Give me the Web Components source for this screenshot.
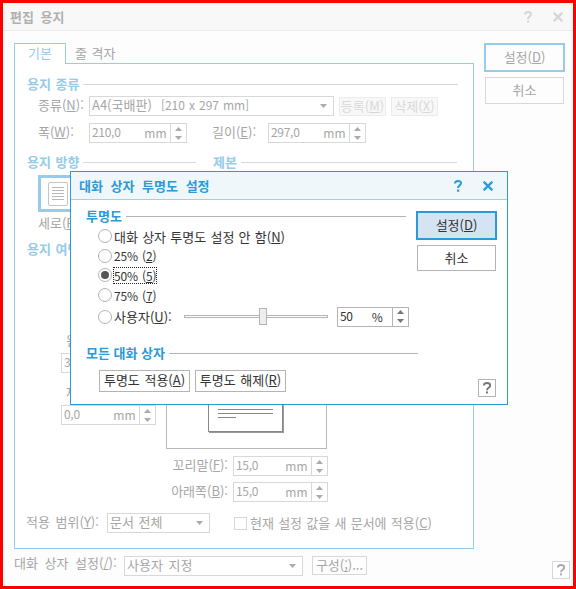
<!doctype html>
<html lang="ko">
<head>
<meta charset="utf-8">
<title>편집 용지</title>
<style>
  html, body { margin: 0; padding: 0; }
  body { width: 576px; height: 589px; overflow: hidden; font: 13px "Noto Sans CJK KR", sans-serif; }
  u { text-underline-offset: 1px; }
  .latin { font-size: 12px; letter-spacing: -.1px; }
</style>
</head>
<body>
<page-dialog>

  <tab-panel>
    <form-heading style="margin-top:13px">용지 종류</form-heading>
    <form-row style="margin:5px 0 0 11px">
      <form-label style="width:51px">종류(<u>N</u>):</form-label>
      <combo-box style="width:245px">A4(국배판)&nbsp; <span class="latin">[210 x 297 mm]</span></combo-box>
      <push-button disabled style="width:47px;height:19px;margin-left:5px">등록(<u>M</u>)</push-button>
      <push-button disabled style="width:47px;height:19px;margin-left:5px">삭제(<u>X</u>)</push-button>
    </form-row>
    <form-row style="margin:7px 0 0 11px">
      <form-label style="width:51px">폭(<u>W</u>):</form-label>
      <spin-field style="width:98px" value="210,0" unit="mm"></spin-field>
      <form-label style="width:56px;margin-left:25px">길이(<u>E</u>):</form-label>
      <spin-field style="width:98px" value="297,0" unit="mm"></spin-field>
    </form-row>
    <form-row style="margin-top:12px;gap:17px">
      <form-heading style="width:169px">용지 방향</form-heading>
      <form-heading style="width:244px">제본</form-heading>
    </form-row>
    <orient-choice style="margin:6px 0 0 11px">세로(<u>R</u>)</orient-choice>
    <form-heading style="margin-top:10px">용지 여백</form-heading>

    <form-row style="align-items:flex-start;margin:44px 0 0 34px;gap:10px">
      <div style="width:95px">
        <form-label style="height:20px;margin:31px 0 2px 5px">왼쪽</form-label>
        <spin-field style="width:95px" value="30,0"></spin-field>
        <form-label style="height:20px;margin:10px 0 2px 5px">제본</form-label>
        <spin-field style="width:95px" value="0,0" unit="mm"></spin-field>
      </div>
      <page-preview></page-preview>
    </form-row>
    <form-row style="margin:7px 0 0 145px">
      <form-label style="width:61px;justify-content:flex-end">꼬리말(<u>F</u>):</form-label>
      <spin-field style="width:95px" value="15,0" unit="mm"></spin-field>
    </form-row>
    <form-row style="margin:6px 0 0 145px">
      <form-label style="width:61px;justify-content:flex-end">아래쪽(<u>B</u>):</form-label>
      <spin-field style="width:95px" value="15,0" unit="mm"></spin-field>
    </form-row>
    <form-row style="margin:11px 0 0 -1px">
      <form-label style="width:81px;word-spacing:2px">적용 범위(<u>Y</u>):</form-label>
      <combo-box style="width:103px">문서 전체</combo-box>
      <check-box style="margin-left:24px">현재 설정 값을 새 문서에 적용(<u>C</u>)</check-box>
    </form-row>
  </tab-panel>

  <push-button slot="actions" primary style="width:81px;height:29px">설정(<u>D</u>)</push-button>
  <push-button slot="actions" style="width:79px;height:27px;margin:5px 0 0 1px">취소</push-button>

  <form-label slot="footer" style="width:110px;word-spacing:3px">대화 상자 설정(<u>/</u>):</form-label>
  <combo-box slot="footer" style="width:179px;word-spacing:2px">사용자 지정</combo-box>
  <push-button slot="footer" style="width:55px;height:19px;margin-left:9px">구성(<u>;</u>)...</push-button>
  <help-button slot="footer" style="margin:5px 0 0 185px"></help-button>

  <alpha-dialog slot="overlay"></alpha-dialog>
</page-dialog>

<script>
(function () {
  // make a shadow root from a plain string
  function shadow (el, html) {
    el.attachShadow({mode: 'open'}).innerHTML = html
  }

  const arrow = `<svg width="7" height="4" viewBox="0 0 7 4"><path d="M0 4 3.5 0 7 4z" fill="var(--arrow,#aaa)"/></svg>`
  const arrowDown = `<svg width="7" height="4" viewBox="0 0 7 4"><path d="M0 0 3.5 4 7 0z" fill="var(--arrow,#aaa)"/></svg>`

  // title bar icons, same shape for both dialogs
  function helpIcon (color) {
    return `<svg width="8" height="12" viewBox="0 0 8 12" style="margin-right:21px"><path d="M1 3.600C1 1.800 2.200 1 4 1S7 1.900 7 3.300C7 5.400 4 5.400 4 8" fill="none" stroke="${color}" stroke-width="2"/><rect x="3" y="9.500" width="2.200" height="2.200" fill="${color}"/></svg>`
  }
  function closeIcon (color) {
    return `<svg width="10" height="10" viewBox="0 0 10 10"><path d="M.7 .7 9.300 9.300M9.300 .7 .7 9.300" stroke="${color}" stroke-width="2.300"/></svg>`
  }

  class PageDialog extends HTMLElement {
    constructor () {
      super()
      shadow(this, `<style>
        :host { display: block; position: relative; box-sizing: border-box; width: 576px; height: 589px;
          border: 3px solid #f00; background: #fdfdfd; color: #a6a6a6;
          --line: #d8d8d8; --ink: #a6a6a6; --arrow: #ababab; --accent: #97cbe9; }
        .bar { height: 28px; box-sizing: border-box; background: #f8f8f8; border-bottom: 1px solid #ececec;
          display: flex; align-items: center; padding: 0 10px 0 7px; font-weight: 700; color: #b0b0b0; }
        .bar span { flex: 1; word-spacing: 3px; }
        .bar svg { display: block; }
        .main { display: flex; padding: 12px 0 0 11px; gap: 10px; }
        .side { display: flex; flex-direction: column; }
        .foot { display: flex; align-items: flex-start; padding: 7px 0 0 11px; }
      </style>
      <div class="bar"><span>편집 용지</span>${helpIcon('#d6d6d6')}${closeIcon('#d6d6d6')}</div>
      <div class="main"><slot></slot><div class="side"><slot name="actions"></slot></div></div>
      <div class="foot"><slot name="footer"></slot></div>
      <slot name="overlay"></slot>`)
    }
  }

  class TabPanel extends HTMLElement {
    constructor () {
      super()
      shadow(this, `<style>
        :host { display: block; width: 460px; }
        .tabs { display: flex; height: 20px; }
        .tab { width: 50px; border: 1px solid var(--accent); border-bottom: 0; background: #fff;
          height: 20px; text-align: center; line-height: 17px; color: var(--accent); position: relative; z-index: 1; }
        .off { padding-left: 9px; line-height: 19px; color: #a6a6a6; word-spacing: 1px; }
        .body { box-sizing: border-box; height: 486px; border: 1px solid var(--accent); background: #fff; padding: 0 15px 0 12px; }
      </style>
      <div class="tabs"><div class="tab">기본</div><div class="off">줄 격자</div></div>
      <div class="body"><slot></slot></div>`)
    }
  }

  class FormHeading extends HTMLElement {
    constructor () {
      super()
      shadow(this, `<style>
        :host { display: flex; align-items: center; gap: 4px; height: 14px; font-weight: 700; color: var(--accent); white-space: nowrap; word-spacing: 1px; }
        span { margin-top: -2px; }
        i { flex: 1; height: 1px; background: var(--rule, var(--line)); }
      </style><span><slot></slot></span><i></i>`)
    }
  }

  class FormRow extends HTMLElement {
    constructor () {
      super()
      shadow(this, `<style>:host { display: flex; align-items: center; }</style><slot></slot>`)
    }
  }

  class FormLabel extends HTMLElement {
    constructor () {
      super()
      shadow(this, `<style>
        :host { display: flex; align-items: center; flex: none; white-space: nowrap; color: var(--ink); line-height: 18px; word-spacing: 1px; box-sizing: border-box; padding-right: 5px; }
        span { margin-top: -2px; }
      </style><span><slot></slot></span>`)
    }
  }

  class ComboBox extends HTMLElement {
    constructor () {
      super()
      shadow(this, `<style>
        :host { display: flex; align-items: center; flex: none; box-sizing: border-box; height: 20px; border: 1px solid var(--line); background: #fff;
          padding: 0 6px 0 2px; color: var(--ink); white-space: nowrap; word-spacing: 1px; }
        span { flex: 1; overflow: hidden; line-height: 18px; margin-top: -2px; }
      </style><span><slot></slot></span>${arrowDown}`)
    }
  }

  class SpinField extends HTMLElement {
    constructor () {
      super()
      shadow(this, `<style>
        :host { display: flex; flex: none; box-sizing: border-box; height: 20px; border: 1px solid var(--line); background: #fff; color: var(--ink); font-size: 12px; line-height: 15px; }
        .v { flex: 1; padding-left: 2px; letter-spacing: -.3px; }
        .u { padding-right: var(--unit-pad, 3px); letter-spacing: .3px; line-height: 18px; }
        .s { width: 15px; border-left: 1px solid var(--line); display: flex; flex-direction: column; align-items: center; justify-content: center; gap: 5px; }
        svg { display: block; }
      </style>
      <div class="v">${this.getAttribute('value') || ''}</div>
      <div class="u">${this.getAttribute('unit') || ''}</div>
      <div class="s">${arrow}${arrowDown}</div>`)
    }
  }

  class PushButton extends HTMLElement {
    constructor () {
      super()
      shadow(this, `<style>
        :host { display: flex; align-items: center; justify-content: center; flex: none; box-sizing: border-box;
          border: 1px solid var(--line); color: var(--ink); white-space: nowrap; word-spacing: 1px; padding-bottom: 2px; }
        :host([primary]) { border: 2px solid var(--accent); background: var(--primary-bg, transparent); }
        :host([disabled]) { background: #f8f8f8; border-color: #ececec; color: #d8d8d8; }
      </style><slot></slot>`)
    }
  }

  class HelpButton extends HTMLElement {
    constructor () {
      super()
      shadow(this, `<style>
        :host { display: flex; align-items: center; justify-content: center; flex: none; box-sizing: border-box; width: 18px; height: 18px;
          border: 1px solid var(--line); background: #fff; }
        svg { display: block; }
      </style><svg width="8" height="12" viewBox="0 0 8 12"><path d="M.8 3.600C.8 1.800 2.100 1 4 1S7.200 2 7.200 3.500C7.200 5.800 4 5.800 4 8.200" fill="none" stroke="var(--arrow)" stroke-width="1.900"/><rect x="3" y="9.400" width="2" height="2" fill="var(--arrow)"/></svg>`)
    }
  }

  class CheckBox extends HTMLElement {
    constructor () {
      super()
      shadow(this, `<style>
        :host { display: flex; align-items: center; gap: 3px; color: var(--ink); white-space: nowrap; word-spacing: .6px; }
        i { width: 11px; height: 11px; border: 1px solid var(--line); background: #fff; }
        span { margin-top: -2px; }
      </style><i></i><span><slot></slot></span>`)
    }
  }

  class OrientChoice extends HTMLElement {
    constructor () {
      super()
      shadow(this, `<style>
        :host { display: block; color: var(--ink); line-height: 18px; }
        .box { box-sizing: border-box; width: 48px; height: 37px; border: 3px solid var(--accent); display: flex; align-items: center; padding-left: 7px; margin-bottom: 2px; }
        .sheet { box-sizing: border-box; width: 20px; height: 24px; border: 1px solid #c4c4c4; border-radius: 2px; display: flex; flex-direction: column; gap: 2px; padding: 4px 3px; }
        .sheet i { height: 1px; background: #b8b8b8; }
      </style>
      <div class="box"><div class="sheet"><i></i><i></i><i></i><i></i><i></i></div></div>
      <slot></slot>`)
    }
  }

  class PagePreview extends HTMLElement {
    constructor () {
      super()
      shadow(this, `<style>
        :host { display: block; box-sizing: border-box; width: 161px; height: 149px; border: 1px solid #b8b8b8; background: #fff; padding: 15px 0 0 41px; }
        .page { box-sizing: border-box; width: 75px; height: 116px; border: 1px solid #888; box-shadow: 1px 1px 0 #999; background: #fff;
          display: flex; flex-direction: column; justify-content: flex-end; gap: 3px; padding: 0 9px 13px; }
        i { height: 1px; background: #888; }
        i:last-child { width: 18px; }
      </style>
      <div class="page"><i></i><i></i><i></i></div>`)
    }
  }

  class RadioOption extends HTMLElement {
    constructor () {
      super()
      shadow(this, `<style>
        :host { display: flex; align-items: center; gap: 2px; color: #333; white-space: nowrap; word-spacing: .6px; height: 18px; }
        .c { box-sizing: border-box; width: 14px; height: 14px; border: 1px solid #b4b4b4; border-radius: 50%; background: #fff; display: flex; align-items: center; justify-content: center; flex: none; }
        :host([checked]) .c::after { content: ""; width: 8px; height: 8px; border-radius: 50%; background: #555; }
        :host([checked]) span { outline: 1px dotted #222; outline-offset: 0; }
        span { line-height: 15px; }
        :host([short]) span { font-size: 12px; letter-spacing: -.1px; }
      </style><div class="c"></div><span><slot></slot></span>`)
    }
  }

  class AlphaSlider extends HTMLElement {
    constructor () {
      super()
      shadow(this, `<style>
        :host { display: block; position: relative; box-sizing: border-box; width: 144px; height: 3px; flex: none; border: 1px solid #b4b4b4; background: #fff; }
        .thumb { position: absolute; left: 74px; top: -8px; box-sizing: border-box; width: 8px; height: 17px; border: 1px solid #b4b4b4; background: #eee; }
      </style><div class="thumb"></div>`)
    }
  }

  class AlphaDialog extends HTMLElement {
    constructor () {
      super()
      shadow(this, `<style>
        :host { position: absolute; left: 67px; top: 168px; box-sizing: border-box; width: 438px; height: 234px; display: block;
          border: 1px solid #2b9ad6; background: #fff; color: #333;
          --line: #b4b4b4; --ink: #333; --arrow: #777; --accent: #2b9ad6; --rule: #b4b4b4; --primary-bg: #d5e4f2; --unit-pad: 9px; }
        .bar { height: 28px; box-sizing: border-box; background: #f0f7fb; border-bottom: 1px solid #a0cfea; display: flex; align-items: center;
          padding: 0 14px 0 8px; font-weight: 700; color: #2b9ad6; word-spacing: 4px; }
        .bar span { flex: 1; margin-top: -1px; }
        svg { display: block; }
        .top { display: flex; }
        .left { width: 345px; padding: 9px 0 0 15px; box-sizing: border-box; }
        .list { display: flex; flex-direction: column; gap: 1.700px; margin: 4px 0 0 12px; }
        .custom { display: flex; align-items: center; height: 20px; margin-top: 1px; }
        .btns { display: flex; flex-direction: column; padding-top: 11px; }
        .all { display: flex; align-items: flex-end; padding: 20px 0 0 15px; }
        .group { width: 332px; }
        .group-btns { display: flex; gap: 5px; margin: 9px 0 0 13px; }
      </style>
      <div class="bar"><span>대화 상자 투명도 설정</span>${helpIcon('#2b9ad6')}${closeIcon('#2b9ad6')}</div>
      <div class="top">
        <div class="left">
          <form-heading style="margin-right:10px">투명도</form-heading>
          <div class="list">
            <radio-option>대화 상자 투명도 설정 안 함(<u>N</u>)</radio-option>
            <radio-option short>25% (<u>2</u>)</radio-option>
            <radio-option short checked>50% (<u>5</u>)</radio-option>
            <radio-option short>75% (<u>7</u>)</radio-option>
            <div class="custom">
              <radio-option style="width:86px">사용자(<u>U</u>):</radio-option>
              <alpha-slider></alpha-slider>
              <spin-field style="width:72px;margin-left:9px" value="50" unit="%"></spin-field>
            </div>
          </div>
        </div>
        <div class="btns">
          <push-button primary style="width:81px;height:29px">설정(<u>D</u>)</push-button>
          <push-button style="width:79px;height:26px;margin:5px 0 0 1px">취소</push-button>
        </div>
      </div>
      <div class="all">
        <div class="group">
          <form-heading style="word-spacing:0">모든 대화 상자</form-heading>
          <div class="group-btns">
            <push-button style="width:91px;height:22px">투명도 적용(<u>A</u>)</push-button>
            <push-button style="width:91px;height:22px">투명도 해제(<u>R</u>)</push-button>
          </div>
        </div>
        <help-button style="margin-left:60px;margin-bottom:-5px"></help-button>
      </div>`)
    }
  }

  window.customElements.define('page-dialog', PageDialog)
  window.customElements.define('tab-panel', TabPanel)
  window.customElements.define('form-heading', FormHeading)
  window.customElements.define('form-row', FormRow)
  window.customElements.define('form-label', FormLabel)
  window.customElements.define('combo-box', ComboBox)
  window.customElements.define('spin-field', SpinField)
  window.customElements.define('push-button', PushButton)
  window.customElements.define('help-button', HelpButton)
  window.customElements.define('check-box', CheckBox)
  window.customElements.define('orient-choice', OrientChoice)
  window.customElements.define('page-preview', PagePreview)
  window.customElements.define('radio-option', RadioOption)
  window.customElements.define('alpha-slider', AlphaSlider)
  window.customElements.define('alpha-dialog', AlphaDialog)
})()
</script>
</body>
</html>
